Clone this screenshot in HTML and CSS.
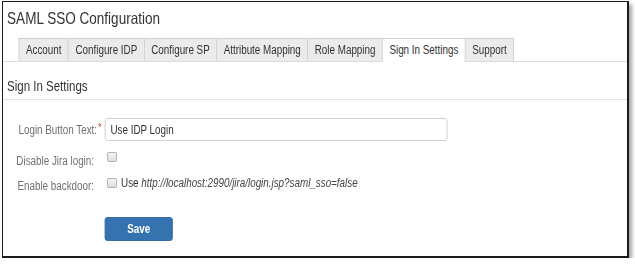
FILE: index.html
```html
<!DOCTYPE html>
<html lang="en">
  <head>
    <meta charset="UTF-8" />
    <meta name="viewport" content="width=device-width, initial-scale=1.0" />
    <title>SAML SSO Configuration</title>
    <link rel="stylesheet" href="styles.css">
  </head>
  <body>
    <div class="frame">
      <!-- the captured page is squeezed horizontally, so the content is narrowed as a whole -->
      <div class="content">
        <h1 class="page-title">SAML SSO Configuration</h1>

        <ul class="tabs">
          <li class="tab">Account</li>
          <li class="tab">Configure IDP</li>
          <li class="tab">Configure SP</li>
          <li class="tab">Attribute Mapping</li>
          <li class="tab">Role Mapping</li>
          <li class="tab active">Sign In Settings</li>
          <li class="tab">Support</li>
        </ul>

        <h2 class="section-title">Sign In Settings</h2>

        <form class="settings-form" onsubmit="return false">
          <div class="field-row">
            <label class="field-label" for="loginButtonText">Login Button Text:<span class="required">*</span></label>
            <input type="text" id="loginButtonText" class="text-input" value="Use IDP Login" />
          </div>

          <div class="field-row row-check">
            <label class="field-label" for="disableLogin">Disable Jira login:</label>
            <div class="check-field">
              <input type="checkbox" id="disableLogin" class="checkbox" />
            </div>
          </div>

          <div class="field-row row-check row-last">
            <label class="field-label" for="enableBackdoor">Enable backdoor:</label>
            <div class="check-field">
              <input type="checkbox" id="enableBackdoor" class="checkbox" />
              <span class="check-text">Use <em>http://localhost:2990/jira/login.jsp?saml_sso=false</em></span>
            </div>
          </div>

          <div class="buttons">
            <button class="save-button">Save</button>
          </div>
        </form>
      </div>
    </div>
  </body>
</html>
```

FILE: styles.css
```css
/* General Styling */
body {
  margin: 0;
  background-color: #ffffff;
  font-family: "Liberation Sans", Arial, sans-serif;
  color: #333;
}
.frame {
  margin: 1px 0 0 2px;
  width: 624px;
  height: 254px;
  overflow: hidden;
  border-style: solid;
  border-color: #1b1b1b;
  border-width: 1px 2px 2px 1px;
  box-shadow: 3px 3px 4px rgba(0, 0, 0, 0.35);
  background-color: #ffffff;
}
.content {
  width: 761px;
  transform: scaleX(0.82);
  transform-origin: 0 0;
}
.page-title {
  margin: 0;
  padding: 6px 0 0 5px;
  font-size: 16.5px;
  line-height: 20px;
  font-weight: normal;
  color: #333;
}

/* Tabs */
.tabs {
  display: flex;
  list-style: none;
  margin: 10px 0 0 0;
  padding: 0 0 0 19px;
  border-bottom: 1px solid #dcdcdc;
  height: 23px;
}
.tab {
  padding: 0 8px;
  height: 22px;
  line-height: 22px;
  font-size: 12px;
  color: #333;
  background-color: #ebebeb;
  border: 1px solid #cfcfcf;
  border-bottom: none;
  margin-left: -1px;
}
.tab:first-child {
  margin-left: 0;
}
.tab.active {
  background-color: #ffffff;
  height: 23px;
  position: relative;
  z-index: 1;
}

/* Section */
.section-title {
  margin: 15px 0 0 0;
  padding: 0 0 4px 5px;
  font-size: 14px;
  line-height: 18px;
  font-weight: normal;
  color: #333;
  border-bottom: 1px solid #e6e6e6;
}
.settings-form {
  margin: 0;
  padding-top: 18px;
}
.field-row {
  display: flex;
  align-items: flex-start;
}
.row-check {
  margin-top: 8px;
}
.row-last {
  margin-top: 6px;
}
.field-label {
  width: 111px;
  flex-shrink: 0;
  padding-top: 5px;
  margin-right: 13px;
  text-align: right;
  font-size: 12px;
  line-height: 14px;
  color: #707070;
  white-space: nowrap;
}
.required {
  color: #d04437;
  font-size: 11px;
  vertical-align: top;
  margin-left: 1px;
  margin-right: -9px;
  position: relative;
  top: -3px;
}
.text-input {
  box-sizing: border-box;
  width: 418px;
  height: 23px;
  margin: 0;
  padding: 0 6px;
  border: 1px solid #cccccc;
  border-radius: 3px;
  font-family: inherit;
  font-size: 12px;
  color: #333;
}
.check-field {
  display: flex;
  align-items: center;
  height: 14px;
  padding-top: 1px;
  padding-left: 3px;
  font-size: 12px;
  line-height: 14px;
  color: #333;
}
.row-last .check-field {
  padding-top: 2px;
}
.checkbox {
  appearance: none;
  width: 12px;
  height: 10px;
  margin: 0 5px 0 0;
  border: 1px solid #a9a9a9;
  border-radius: 2px;
  background: linear-gradient(#f4f4f4, #dedede);
}
.check-text em {
  color: #444;
}
.buttons {
  margin-top: 24px;
  padding-left: 124px;
}
.save-button {
  width: 83px;
  height: 24px;
  padding: 0;
  border: 1px solid #2f67a0;
  border-radius: 3px;
  background-color: #3572b0;
  color: #ffffff;
  font-family: inherit;
  font-size: 12px;
  font-weight: bold;
  cursor: pointer;
}
```
